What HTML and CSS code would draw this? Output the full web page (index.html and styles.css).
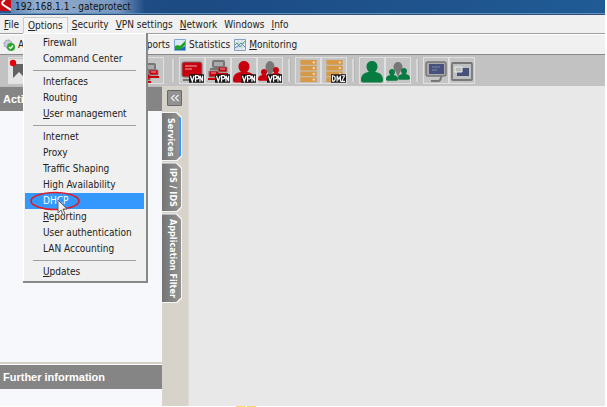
FILE: index.html
```html
<!DOCTYPE html>
<html lang="en">
<head>
<meta charset="utf-8">
<title>192.168.1.1 - gateprotect</title>
<link rel="stylesheet" href="styles.css">
</head>
<body>
<svg class="defs" aria-hidden="true">
  <symbol id="vpn" viewBox="0 0 16 9"><rect width="16" height="9" fill="#151515"/><path d="M1.5 1.5l2 6 2-6M7 8V1.5h2.2q1.3 0 1.3 1.6T9.200 5H7M11.700 8V1.500l2.800 6v-6" fill="none" stroke="#fff" stroke-width="1.300"/></symbol>
  <symbol id="dmz" viewBox="0 0 16 9"><rect width="16" height="9" fill="#151515"/><path d="M1.500 7.500v-6q3 0 3 3t-3 3M6.500 8V1.500l1.800 4 1.800-4V8M11.500 1.500h3l-3 6h3.500" fill="none" stroke="#fff" stroke-width="1.200"/></symbol>
  <symbol id="person" viewBox="0 0 22 22"><path d="M11 0c3.500 0 5.500 2.500 5.500 5.500 0 2.700-1.300 4.300-2.500 5.500 5 .5 8 3 8 8 0 2-1 2.500-3 2.500H3c-2 0-3-.5-3-2.500 0-5 3-7.500 8-8C6.800 9.800 5.500 8.200 5.500 5.500 5.500 2.500 7.500 0 11 0z"/></symbol>
  <symbol id="rack" viewBox="0 0 18 24"><g fill="#d59948"><rect width="17" height="5"/><rect y="6" width="17" height="5"/><rect y="12" width="17" height="5"/><rect y="18" width="17" height="5"/></g><g fill="#f4ddb8"><circle cx="14" cy="2.500" r="1.200"/><circle cx="14" cy="8.500" r="1.200"/><circle cx="14" cy="14.500" r="1.200"/><circle cx="14" cy="20.500" r="1.200"/></g></symbol>
  <symbol id="hosts" viewBox="0 0 24 24"><rect x="7" y="3" width="11" height="6" rx="1" fill="#aaa" stroke="#777" stroke-width="2"/><path d="M4 11h15" stroke="#777" stroke-width="2"/><path d="M12 9h9v5h-9zM3 13h10v6H3z" fill="#c8000d" stroke="#8b7777"/><path d="M11 16h11M2 21h12" stroke="#c8000d" stroke-width="2"/><path d="M14 11h5M5 15h5" stroke="#eaa"/></symbol>
</svg>
<div class="window">
  <header class="titlebar">
    <svg class="logo" width="11" height="11" viewBox="0 0 11 11"><path fill="#c80b12" d="M0 0h11v11H0z"/><path d="M5 0Q0 3 4 5.500L11 10" fill="none" stroke="#fff" stroke-width="2"/></svg>
    <span class="title">192.168.1.1 - gateprotect</span>
  </header>
  <nav class="menubar">
    <button><u>F</u>ile</button>
    <div class="menu-holder">
      <button class="open"><u>O</u>ptions</button>
      <div class="menu">
        <button>Firewall</button>
        <button>Command Center</button>
        <hr>
        <button>Interfaces</button>
        <button>Routing</button>
        <button><u>U</u>ser management</button>
        <hr>
        <button>Internet</button>
        <button>Proxy</button>
        <button>Traffic Shaping</button>
        <button>High Availability</button>
        <button class="selected">DHCP
          <svg class="marker" width="50" height="24" viewBox="0 0 50 24"><ellipse cx="25" cy="11" rx="24" ry="8.500" fill="none" stroke="#e01b24" stroke-width="1.600"/><path d="M28 10v13l3-3 2 5 2-1-2-5h4z" fill="#eee" stroke="#666"/></svg>
        </button>
        <button><u>R</u>eporting</button>
        <button>User authentication</button>
        <button>LAN Accounting</button>
        <hr>
        <button><u>U</u>pdates</button>
      </div>
    </div>
    <button><u>S</u>ecurity</button>
    <button><u>V</u>PN settings</button>
    <button><u>N</u>etwork</button>
    <button>Windows</button>
    <button><u>I</u>nfo</button>
  </nav>
  <div class="linkbar">
    <div class="link-group">
      <button><svg width="12" height="12" viewBox="0 0 12 12"><circle cx="5" cy="5" r="4" fill="#c5cbd5" stroke="#8993a4" stroke-dasharray="2 1"/><circle cx="8" cy="8" r="4" fill="#28a428"/><path d="M6 8l1.500 1.500L10 6.500" fill="none" stroke="#fff" stroke-width="1.300"/></svg>Add</button>
      <button>Reports</button>
    </div>
    <button><svg width="12" height="12" viewBox="0 0 12 12"><path d="M.5.5h11v11H.5z" fill="#dce9f8" stroke="#7ba6d8"/><path d="M1 7l3-1 2 1 5-5v4L6 11H1z" fill="#19a51d"/><path d="M1 10l4 1 6-4v4H1z" fill="#1767c1"/></svg>Statistics</button>
    <button><svg width="12" height="12" viewBox="0 0 12 12"><path d="M.5.5h11v11H.5z" fill="#e4edf5" stroke="#8aa0b8"/><path d="M1 4h10M1 8h10M4 1v10M8 1v10" stroke="#c5d5e4"/><path d="M1 6l2-2 3 4 5-6" fill="none" stroke="#52a45a"/><path d="M1 9l3-2 3-3 4 4" fill="none" stroke="#5a8bc8"/></svg><span><u>M</u>onitoring</span></button>
  </div>
  <div class="toolbar">
    <div class="tools first">
      <button aria-label="Select"><svg viewBox="0 0 24 24"><path fill="#e4e4e4" d="M0 0h24v24H0z"/><path d="M4 5h14l-4 4 7 7-4 4-7-7-6 6z" fill="#626262"/><circle cx="4" cy="4" r="3.200" fill="#e5000d"/></svg></button>
      <button aria-label="Tool 2"></button>
      <button aria-label="Tool 3"></button>
      <button aria-label="Tool 4"></button>
      <button aria-label="Tool 5"></button>
      <button aria-label="Hosts"><svg viewBox="0 0 24 24"><use href="#hosts" x="-2" y="2" width="24" height="24"/></svg></button>
    </div>
    <div class="tools">
      <button aria-label="VPN computer"><svg viewBox="0 0 24 24"><rect x="2" y="3" width="20" height="15" rx="2" fill="#c8000d" stroke="#777"/><path d="M5 7h12M5 10h7" stroke="#f0aaaa"/><path d="M3 21h7" stroke="#777" stroke-width="2"/><use href="#vpn" x="9" y="15" width="15" height="9"/></svg></button>
      <button aria-label="VPN group"><svg viewBox="0 0 24 24"><use href="#hosts" y="-1" width="24" height="24"/><use href="#vpn" x="9" y="15" width="15" height="9"/></svg></button>
      <button aria-label="VPN user"><svg viewBox="0 0 24 24"><use href="#person" x="1" y="2" width="22" height="22" fill="#c8000d"/><use href="#vpn" x="9" y="15" width="15" height="9"/></svg></button>
      <button aria-label="VPN users"><svg viewBox="0 0 24 24"><ellipse cx="12" cy="8" rx="4.500" ry="6" fill="#777"/><path d="M9 12h6l-3 6z" fill="#777"/><use href="#person" x="0" y="10" width="12" height="12" fill="#c8000d"/><use href="#person" x="12" y="8" width="12" height="12" fill="#c8000d"/><use href="#vpn" x="9" y="15" width="15" height="9"/></svg></button>
    </div>
    <div class="tools">
      <button aria-label="Server"><svg viewBox="0 0 24 24"><use href="#rack" x="4" y="1" width="18" height="23"/></svg></button>
      <button aria-label="DMZ server"><svg viewBox="0 0 24 24"><use href="#rack" x="4" y="1" width="18" height="23"/><use href="#dmz" x="9" y="15" width="15" height="9"/></svg></button>
    </div>
    <div class="tools">
      <button aria-label="User"><svg viewBox="0 0 24 24"><use href="#person" x="1" y="2" width="22" height="22" fill="#087b40"/></svg></button>
      <button aria-label="User group"><svg viewBox="0 0 24 24"><ellipse cx="12" cy="8" rx="4.500" ry="5" fill="#777"/><path d="M9 11h6l-3 7z" fill="#777"/><use href="#person" x="0" y="10" width="12" height="12" fill="#087b40"/><use href="#person" x="12" y="9" width="12" height="12" fill="#087b40"/></svg></button>
    </div>
    <div class="tools">
      <button aria-label="Monitor"><svg viewBox="0 0 24 24"><rect x="2" y="3" width="20" height="14" rx="2" fill="#aaa" stroke="#777" stroke-width="1.500"/><path fill="#46527b" d="M5 5h15v10H5z"/><path d="M8 8h8M8 11h5" stroke="#7b86a8"/><path d="M17 17q0 5-3 5H7" fill="none" stroke="#777" stroke-width="2"/></svg></button>
      <button aria-label="Window"><svg viewBox="0 0 24 24"><rect x="2" y="4" width="20" height="17" rx="1" fill="#c0c0c0" stroke="#777" stroke-width="1.800"/><path fill="#46527b" d="M7 9h12v8H7z"/><path fill="#b7bcb7" stroke="#eee" d="M5 8h7v5H5z"/></svg></button>
    </div>
  </div>
  <div class="content">
    <aside class="sidebar">
      <section class="panel grow"><h2>Actions</h2></section>
      <section class="panel info"><h2>Further information</h2></section>
    </aside>
    <div class="rail">
      <button class="collapse" aria-label="Collapse"><svg width="10" height="8" viewBox="0 0 10 8"><path d="M4.500 1L1.500 4l3 3M8.500 1l-3 3 3 3" fill="none" stroke="#eee" stroke-width="1.300"/></svg></button>
      <button class="tab active"><span>Services</span></button>
      <button class="tab"><span>IPS / IDS</span></button>
      <button class="tab"><span>Application Filter</span></button>
    </div>
    <main class="workspace"></main>
  </div>
  <footer class="edge"><i></i><i></i></footer>
</div>
</body>
</html>
```
FILE: styles.css
```css
* { box-sizing: border-box; }
body { margin: 0; background: #fff; color: #222; font: 10px/16px "DejaVu Sans Condensed", "DejaVu Sans", sans-serif; }
button { font: inherit; color: inherit; border: 0; padding: 0; margin: 0; background: none; white-space: nowrap; }
.defs { position: absolute; width: 0; height: 0; }
.window { display: flex; flex-direction: column; height: 100vh; padding-right: 2px; }
.titlebar { display: flex; align-items: flex-start; height: 15px; overflow: hidden; background: linear-gradient(90deg, #28538b, #1c4a83 30%, #205b95); border-bottom: 1px solid #304f78; box-shadow: inset 0 -1px #5d91bd; }
.title { padding: 0 14px 0 4px; line-height: 13px; color: #111; background: linear-gradient(90deg, #6186b5, #93aed0 20%, #7797c0 80%, transparent); }
.menubar { display: flex; height: 19px; padding: 2px 0 0 4px; gap: 7px; background: #f0f0f0; border-bottom: 1px solid #a0a0a0; }
.menu-holder { position: relative; margin: 0 -3px; }
.menu-holder .open { padding: 0 4px; border: 1px solid #ccc; border-bottom: 0; line-height: 15px; background: #f4f4f4; }
.menu { position: absolute; z-index: 2; top: 16px; left: 0; width: 125px; padding: 2px 2px 1px; background: #f0f0f0; border: solid #888; border-width: 0 2px 2px 0; box-shadow: inset 1px 1px #fff; }
.menu button { position: relative; display: block; width: 100%; height: 16px; padding-left: 18px; text-align: left; }
.menu .selected { background: #3399ff; color: #fff; }
.menu hr { height: 1px; margin: 3px 8px; border: 0; background: #a0a0a0; }
.marker { position: absolute; left: 5px; top: -3px; overflow: visible; z-index: 1; }
.linkbar { display: flex; height: 21px; gap: 4px; align-items: center; background: #f0f0f0; border-top: 1px solid #fff; border-bottom: 1px solid #888; }
.linkbar button { display: flex; align-items: center; gap: 3px; }
.link-group { display: flex; justify-content: space-between; width: 170px; padding-left: 3px; }
.toolbar { display: flex; align-items: center; height: 31px; padding-left: 8px; background: #c2c2c2; }
.tools { display: flex; }
.tools + .tools::before { content: ""; width: 2px; margin: 2px 4px 2px 5px; background: #d8d8d8; border-right: 1px solid #b8b8b8; }
.tools.first { margin-right: 3px; }
.tools button { width: 26px; height: 27px; border: 1px solid #e0e0e0; background: #c5c5c5; }
.tools svg { display: block; width: 24px; height: 24px; }
.content { display: flex; flex: 1; min-height: 0; }
.sidebar { display: flex; flex-direction: column; width: 162px; background: #f7f8fb; border-top: 1px solid #bbb; }
.panel h2 { margin: 0; padding-left: 3px; background: #858585; color: #fff; font: bold 11px/24px "Liberation Sans", Arial, sans-serif; }
.grow { flex: 1; }
.info { height: 44px; border-top: 2px solid #d5d1c9; box-shadow: inset 0 1px #fff; padding-top: 1px; }
.rail { display: flex; flex-direction: column; align-items: flex-start; gap: 1px; width: 27px; background: #d7d2ca; border-right: 1px solid #e0ddd8; }
.collapse { display: flex; align-items: center; justify-content: center; width: 15px; height: 16px; margin: 4px 0 5px 5px; border: 1px solid #686868; border-radius: 1px; background: #929292; }
.tab { width: 20px; padding: 1px 1px 1px 0; background: #f5f5f5; clip-path: polygon(0 0, 15px 0, 100% 5px, 100% calc(100% - 5px), 15px 100%, 0 100%); }
.tab span { display: block; width: 19px; padding: 5px 0 4px; background: linear-gradient(90deg, #757575, #929292); clip-path: polygon(0 0, 14px 0, 100% 5px, 100% calc(100% - 5px), 14px 100%, 0 100%); color: #fff; font-size: 9px; font-weight: bold; line-height: 17px; writing-mode: vertical-rl; }
.tab.active span { border-right: 2px solid #3399ff; }
.workspace { flex: 1; background: #e8e8e8; }
.edge { display: flex; gap: 2px; height: 1px; padding-left: 236px; }
.edge i { width: 9px; background: #ffd36f; }
```
